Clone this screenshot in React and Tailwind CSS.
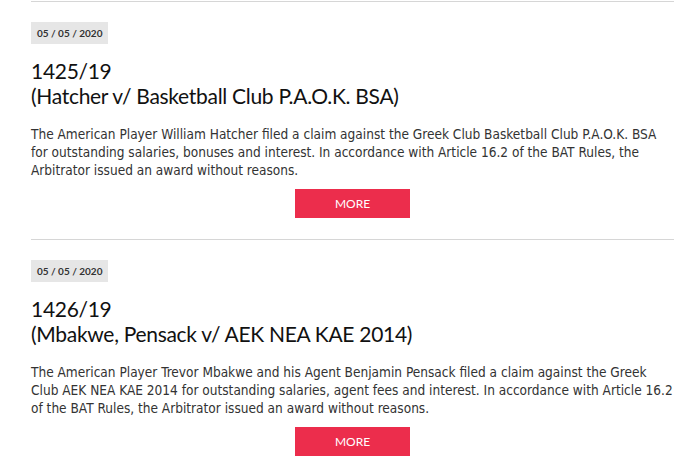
const items = [
  {
    date: "05 / 05 / 2020",
    number: "1425/19",
    title: "(Hatcher v/ Basketball Club P.A.O.K. BSA)",
    text: "The American Player William Hatcher filed a claim against the Greek Club Basketball Club P.A.O.K. BSA for outstanding salaries, bonuses and interest. In accordance with Article 16.2 of the BAT Rules, the Arbitrator issued an award without reasons.",
  },
  {
    date: "05 / 05 / 2020",
    number: "1426/19",
    title: "(Mbakwe, Pensack v/ AEK NEA KAE 2014)",
    text: "The American Player Trevor Mbakwe and his Agent Benjamin Pensack filed a claim against the Greek Club AEK NEA KAE 2014 for outstanding salaries, agent fees and interest. In accordance with Article 16.2 of the BAT Rules, the Arbitrator issued an award without reasons.",
  },
];

export default function App() {
  return (
    <div className="min-h-screen bg-white pl-[31px] pr-[17px] pt-px">
      {items.map((item) => (
        <div key={item.number} className="border-t border-[#d6d6d6] pt-[20px] pb-[21px]">
          <div className="w-fit bg-[#e6e6e6] px-[6px] h-[22px] leading-[22px] text-[10px] font-bold text-[#333] font-['Lato',sans-serif]">
            {item.date}
          </div>
          <h2 className="mt-[14px] text-[21px] leading-[25px] tracking-[-0.3px] text-[#111] font-['Lato',sans-serif]">
            {item.number}
            <br />
            {item.title}
          </h2>
          <p className="mt-[17px] text-[13.55px] leading-[18px] text-[#333] font-['DejaVu_Sans_Condensed','DejaVu_Sans',sans-serif]">
            {item.text}
          </p>
          <div className="mt-[10px] flex justify-center">
            <button className="w-[115px] h-[29px] bg-[#ec2d4c] text-white text-[12px] font-['Lato',sans-serif]">
              MORE
            </button>
          </div>
        </div>
      ))}
    </div>
  );
}
